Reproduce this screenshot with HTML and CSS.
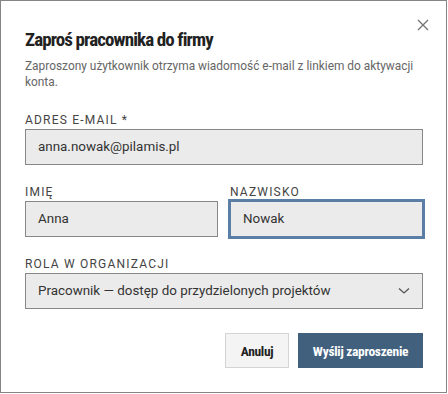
FILE: index.html
```html
<html>
<head>
	<meta charset="utf-8">
	<title>Zaproś pracownika</title>
	<link rel="stylesheet" href="styles.css">
</head>
<body>
	<div class="dialog">
		<a href="#" class="close" title="Zamknij">
			<svg width="12" height="12" viewBox="0 0 12 12"><path d="M1 1L11 11M11 1L1 11" stroke="#777" stroke-width="1.4" fill="none"/></svg>
		</a>
		<h2>Zaproś pracownika do firmy</h2>
		<p class="desc">Zaproszony użytkownik otrzyma wiadomość e-mail z linkiem do aktywacji konta.</p>
		<form>
			<div class="field first">
				<label>ADRES E-MAIL *</label>
				<div class="input">anna.nowak@pilamis.pl</div>
			</div>
			<div class="row">
				<div class="field">
					<label>IMIĘ</label>
					<div class="input">Anna</div>
				</div>
				<div class="field">
					<label>NAZWISKO</label>
					<div class="input focus">Nowak</div>
				</div>
			</div>
			<div class="field">
				<label>ROLA W ORGANIZACJI</label>
				<div class="input select">
					<span>Pracownik — dostęp do przydzielonych projektów</span>
					<svg width="12" height="8" viewBox="0 0 12 8"><path d="M1 1.5L6 6L11 1.5" stroke="#555" stroke-width="1.3" fill="none"/></svg>
				</div>
			</div>
			<div class="actions">
				<button type="button" class="btn">Anuluj</button>
				<button type="button" class="btn primary">Wyślij zaproszenie</button>
			</div>
		</form>
	</div>
</body>
</html>
```

FILE: styles.css
```css
body, html, div, h2, form, p, label{
	padding: 0; margin: 0;
}
body{
	background: #fff;
	color: #333;
	font: 13px/16px Roboto, "Liberation Sans", sans-serif;
}
.dialog{
	position: relative;
	width: 447px;
	height: 393px;
	box-sizing: border-box;
	border: 1px solid #858585;
	background: #fff;
	padding: 28px 23px 0 24px;
}
.close{
	position: absolute;
	top: 18px;
	right: 17px;
	display: block;
	width: 12px;
	height: 12px;
}
.close svg{
	display: block;
}
.dialog h2{
	font: bold 19px/22px Roboto, sans-serif;
	font-stretch: condensed;
	letter-spacing: -0.9px;
	color: #222;
}
.desc{
	margin-top: 7px;
	color: #666;
	font-size: 11.9px;
	line-height: 16px;
}
.field{
	display: flex;
	flex-direction: column;
	margin-top: 20px;
}
.field.first{
	margin-top: 23px;
}
.field label{
	font-size: 12px;
	line-height: 14px;
	letter-spacing: 1.2px;
	color: #444;
	margin-bottom: 2px;
}
.input{
	height: 36px;
	box-sizing: border-box;
	border: 1px solid #878787;
	background: #ebebeb;
	padding: 0 12px;
	font-size: 13.4px;
	line-height: 34px;
	color: #333;
}
.input.focus{
	border-color: #5a7ea4;
	box-shadow: 0 0 0 2px #5a7ea4;
}
.row{
	display: grid;
	grid-template-columns: 1fr 1fr;
	gap: 12px;
}
.select{
	display: flex;
	align-items: center;
	justify-content: space-between;
}
.actions{
	display: flex;
	justify-content: flex-end;
	gap: 9px;
	margin-top: 24px;
}
.btn{
	height: 35px;
	width: 64px;
	padding: 0;
	border: 1px solid #d4d4d4;
	background: #f4f4f5;
	color: #222;
	font: bold 13.5px Roboto, sans-serif;
	font-stretch: condensed;
	letter-spacing: -0.3px;
	cursor: pointer;
}
.btn.primary{
	width: 125px;
	background: #41607e;
	border-color: #41607e;
	color: #fff;
}
```
